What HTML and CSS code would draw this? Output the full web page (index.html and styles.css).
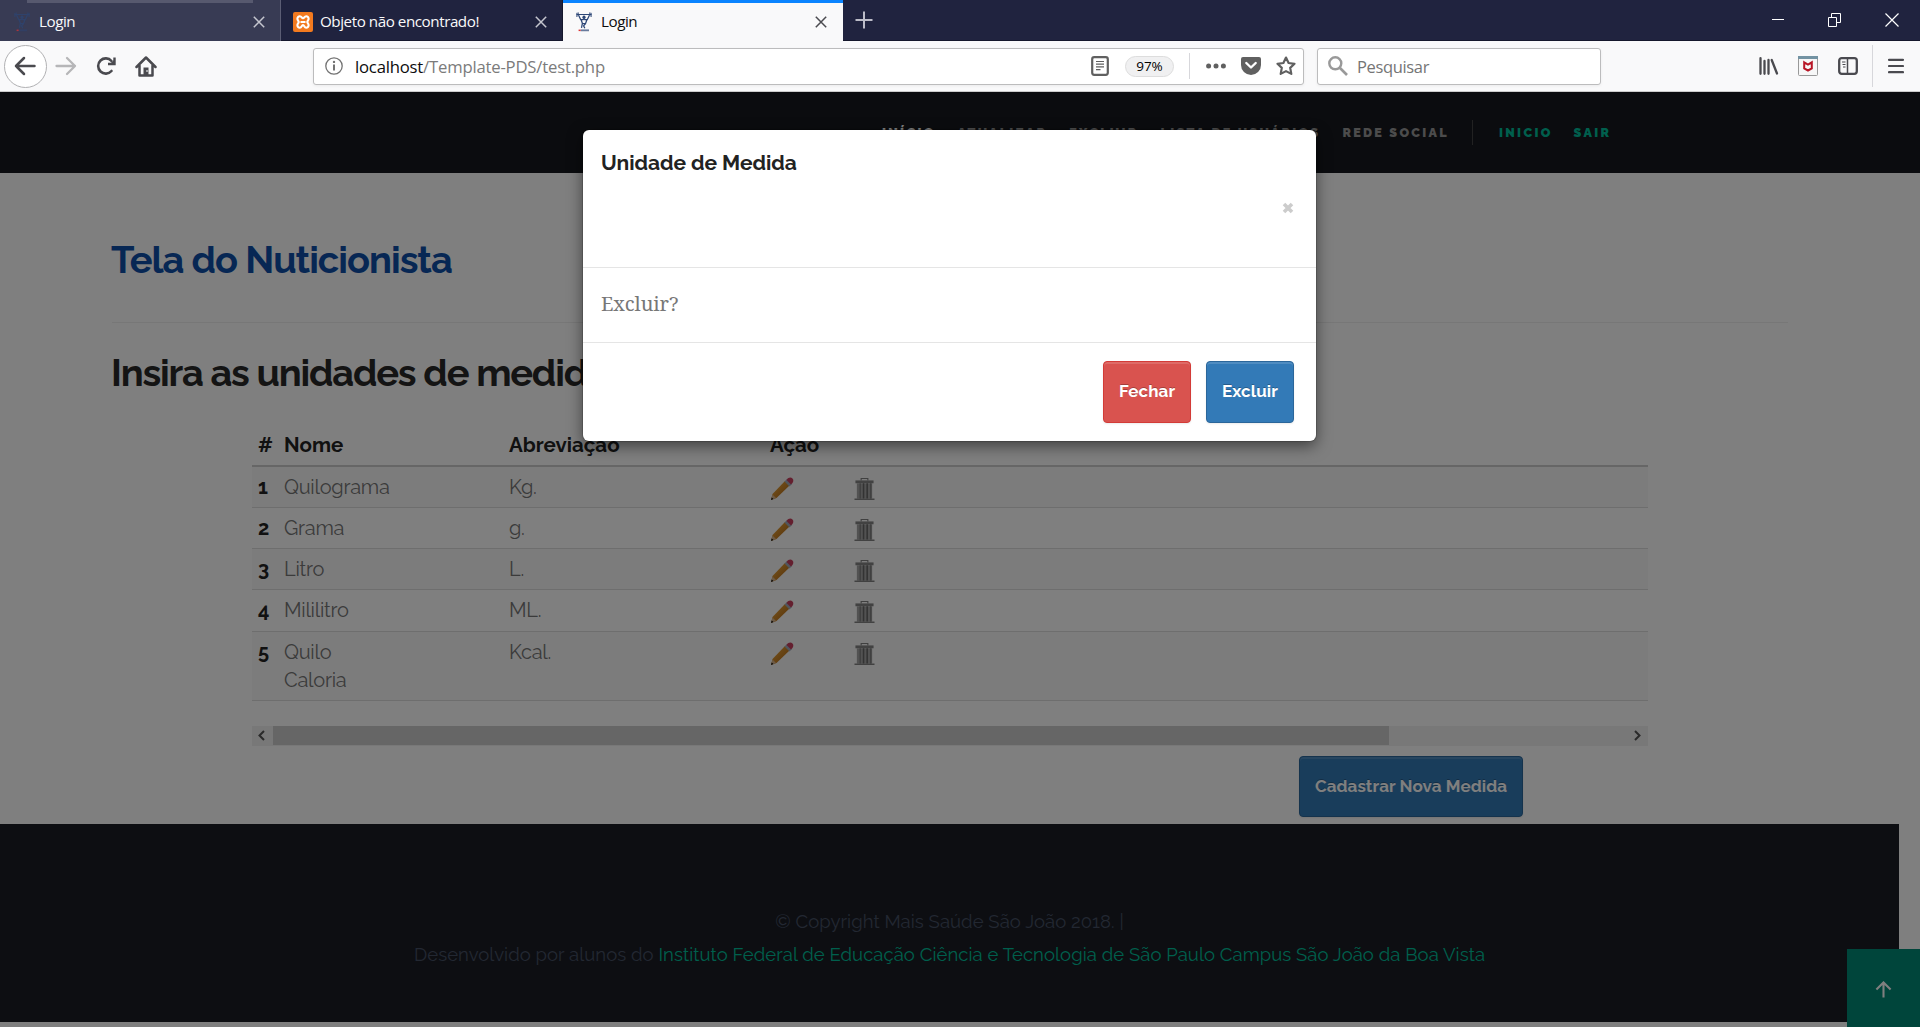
FILE: index.html
```html
<!DOCTYPE html>
<html lang="pt-BR">
<head>
<meta charset="utf-8">
<title>Login</title>
<link rel="stylesheet" href="styles.css">
</head>
<body>
<svg class="defs" width="0" height="0">
  <defs>
    <linearGradient id="wood" x1="0" y1="0" x2="1" y2="1"><stop offset="0" stop-color="#f4b240"/><stop offset="1" stop-color="#a85c10"/></linearGradient>
    <symbol id="lifter" viewBox="0 0 20 24">
      <path d="M1 3h18M1.500 1v5M3 .5v4M18.500 1v5M17 .5v4" stroke="currentColor" stroke-width="1.200" fill="none"/>
      <path d="M3.500 4l2.500 5h3l1-1 1 1h3l2.500-5M6.500 9l1.500 4.500M13.500 9l-1.500 4.500M7.500 14h5M8 14l-1 5M12 14l-2.500 2.500 1.500 3" stroke="currentColor" stroke-width="1.500" fill="none"/>
      <circle cx="10" cy="6.200" r="1.900" fill="currentColor"/>
      <path d="M6 22h10" stroke="currentColor" stroke-width="2.200" opacity=".7"/><path d="M3.500 22h2.500" stroke="#d33" stroke-width="1.800"/>
    </symbol>
    <symbol id="close" viewBox="0 0 12 12"><path d="M.8.8l10.400 10.400M11.200.8L.8 11.200" stroke="currentColor" stroke-width="1.500" fill="none"/></symbol>
    <symbol id="pencil" viewBox="0 0 24 24">
      <path d="M1 23l1.500-6L15 4l4.500 4.500L6.500 21z" fill="url(#wood)"/>
      <path d="M2.500 17.500L1 23l5-2z" fill="#d8b48c"/><path d="M1 23l.7-2.500 1.800 1.600z" fill="#111"/>
      <path d="M14.500 4.500L17 2l5 5-2.500 2.500z" fill="#a3adbc"/><path d="M16.500 3c2-3 4.500-3 6-1.500s1 4-1.500 6z" fill="#c83f5e"/>
    </symbol>
    <symbol id="trash" viewBox="0 0 22 24">
      <path d="M7.500 3V1h7v2" fill="none" stroke="#808080" stroke-width="1.200"/>
      <path d="M1.500 3h19v3h-19z" fill="#858585"/><path d="M3 6h16v16H3z" fill="#a4a4a4"/>
      <path d="M6.500 6v16M17.500 6v16" stroke="#808080" stroke-width="1.500"/>
      <path d="M10 6v16M13.800 6v16" stroke="#666" stroke-width="1.600"/>
      <path d="M.5 22.700h21" stroke="#6c6c6c" stroke-width="1.300"/>
    </symbol>
  </defs>
</svg>

<div class="tabs">
  <div class="tab tab-loading"><svg class="fav"><use href="#lifter"/></svg><span>Login</span><svg class="x"><use href="#close"/></svg></div>
  <div class="tab tab-second"><svg class="fav" viewBox="0 0 20 20"><rect width="20" height="20" rx="2" fill="#f37a1f"/><path d="M6.800 4.300c2 0 1.800 2 3.200 2s1.200-2 3.200-2a2.400 2.400 0 0 1 2.400 2.500c0 1.500-1.300 1.900-1.300 3.200s1.300 1.700 1.300 3.200a2.400 2.400 0 0 1-2.400 2.500c-2 0-1.800-2.700-3.200-2.700s-1.200 2.700-3.200 2.700a2.400 2.400 0 0 1-2.400-2.500c0-1.500 1.300-1.900 1.300-3.200S4.400 8.300 4.400 6.800a2.400 2.400 0 0 1 2.400-2.500zM7.500 10h5" fill="none" stroke="#fff" stroke-width="2.100"/></svg><span>Objeto não encontrado!</span><svg class="x"><use href="#close"/></svg></div>
  <div class="tab tab-active"><svg class="fav"><use href="#lifter"/></svg><span>Login</span><svg class="x"><use href="#close"/></svg></div>
  <svg class="plus" viewBox="0 0 18 18"><path d="M9 .5v17M.5 9h17" stroke="#bcbcc8" stroke-width="2"/></svg>
  <div class="window-controls">
    <svg width="12" height="12" viewBox="0 0 12 12"><path d="M0 5.500h12" stroke="#fff"/></svg>
    <svg width="13" height="14" viewBox="0 0 13 14"><path d="M.5 4.500h8v9h-8zM3.500 4V.5h9v9h-4" fill="none" stroke="#fff"/></svg>
    <svg width="14" height="14" viewBox="0 0 14 14"><path d="M.5.5l13 13M13.500.5l-13 13" stroke="#fff" stroke-width="1.200"/></svg>
  </div>
</div>

<div class="toolbar">
  <span class="back"><svg width="22" height="20" viewBox="0 0 22 20"><path d="M20.500 10H2M10 2L2 10l8 8" fill="none" stroke="#4a4a4f" stroke-width="2.500" stroke-linecap="round" stroke-linejoin="round"/></svg></span>
  <svg class="forward" width="22" height="20" viewBox="0 0 22 20"><path d="M1.500 10H20M12 2l8 8-8 8" fill="none" stroke="#b6b6b8" stroke-width="2.300" stroke-linecap="round" stroke-linejoin="round"/></svg>
  <svg class="reload" width="20" height="20" viewBox="0 0 20 20"><path d="M15.500 15A7.600 7.600 0 1 1 15.500 5" fill="none" stroke="#4a4a4f" stroke-width="2.600" stroke-linecap="round"/><path d="M18.500 1.500v6.500h-6.500" fill="none" stroke="#4a4a4f" stroke-width="2.400"/><path d="M19 3v5.500h-5.500z" fill="#4a4a4f"/></svg>
  <svg class="home" width="22" height="21" viewBox="0 0 22 21"><path d="M1.500 11L11 1.500 20.500 11M4.500 9.500v10h13v-10" fill="none" stroke="#4a4a4f" stroke-width="2.500" stroke-linecap="round" stroke-linejoin="round"/><path d="M8.500 20v-8.500h5V20z" fill="#4a4a4f"/><path d="M12 14v2" stroke="#fff" stroke-width="1"/></svg>
  <div class="urlbar">
    <svg class="info" width="18" height="18" viewBox="0 0 18 18"><circle cx="9" cy="9" r="8.200" fill="none" stroke="#737373" stroke-width="1.300"/><path d="M9 7.500v6" stroke="#737373" stroke-width="2"/><circle cx="9" cy="4.900" r="1.200" fill="#737373"/></svg>
    <span class="url"><b>localhost</b>/Template-PDS/test.php</span>
    <svg class="reader" width="18" height="20" viewBox="0 0 18 20"><rect x="1.200" y="1.200" width="15.600" height="17.600" rx="2" fill="none" stroke="#606060" stroke-width="2.200"/><path d="M5 5.500h8M5 8.200h8M5 10.900h8M5 13.600h4.500" stroke="#606060" stroke-width="1.200"/></svg>
    <span class="zoom-level">97%</span>
    <i class="rule"></i>
    <svg class="dots" width="20" height="6" viewBox="0 0 20 6"><g fill="#606060"><circle cx="2.600" cy="3" r="2.500"/><circle cx="10" cy="3" r="2.500"/><circle cx="17.400" cy="3" r="2.500"/></g></svg>
    <svg class="pocket" width="20" height="18" viewBox="0 0 20 18"><path d="M2 0h16q2 0 2 2v6a10 10 0 0 1-20 0V2q0-2 2-2z" fill="#606060"/><path d="M5.300 6l4.700 4.500L14.700 6" fill="none" stroke="#fff" stroke-width="2.400" stroke-linecap="round" stroke-linejoin="round"/></svg>
    <svg class="star" width="20" height="20" viewBox="0 0 20 20"><path d="M10 1.600l2.600 5.400 5.900.8-4.300 4.100 1.100 6L10 15.100l-5.300 2.800 1.100-6L1.500 7.800 7.400 7z" fill="none" stroke="#606060" stroke-width="2.200" stroke-linejoin="round"/></svg>
  </div>
  <div class="search">
    <svg width="20" height="20" viewBox="0 0 20 20"><circle cx="7.300" cy="7.300" r="6" fill="none" stroke="#999" stroke-width="2.400"/><path d="M12 12l7 7" stroke="#999" stroke-width="2.600"/></svg>
    <span>Pesquisar</span>
  </div>
  <svg class="library" width="20" height="18" viewBox="0 0 20 18"><path d="M1.500 1.200v15.600M5.500 4v12.800M9.500 3v13.800M12.700 3l5.300 13.500" stroke="#4a4a4f" stroke-width="2.300" stroke-linecap="round" fill="none"/></svg>
  <svg class="mcafee" width="20" height="20" viewBox="0 0 20 20"><rect x=".5" y=".5" width="19" height="19" rx="1" fill="#f7f7f7" stroke="#999"/><path d="M0 0h20v3H0z" fill="#7393a3"/><path d="M6.200 6.300L10 8.500l3.800-2.200v6.200L10 14.500 6.200 12.500z" fill="none" stroke="#b81626" stroke-width="2"/></svg>
  <svg class="sidebar" width="20" height="18" viewBox="0 0 20 18"><rect x="1.200" y="1.200" width="17.600" height="15.600" rx="2.500" fill="none" stroke="#4a4a4f" stroke-width="2.300"/><path d="M9.500 1v16" stroke="#4a4a4f" stroke-width="1.500"/><path d="M4 5h3.500M4.500 7.500h3M5 10h2.500" stroke="#4a4a4f" stroke-width="1.100"/></svg>
  <i class="tool-rule"></i>
  <svg class="menu" width="16" height="16" viewBox="0 0 16 16"><path d="M1 1.800h14M1 8h14M1 14.200h14" stroke="#4a4a4f" stroke-width="2.200" stroke-linecap="round"/></svg>
</div>

<div class="page">
  <nav class="nav">
    <a class="current">Início</a><a>Atualizar</a><a>Excluir</a><a>Lista de usuários</a><a>Rede Social</a>
    <span class="account"><a>Inicio</a><a>Sair</a></span>
  </nav>
  <main class="content">
    <h1 class="title">Tela do Nuticionista</h1>
    <h2 class="subtitle">Insira as unidades de medida</h2>
    <div class="table-wrap">
      <table class="units">
        <colgroup><col class="c-num"><col class="c-name"><col class="c-abbr"><col class="c-edit"><col></colgroup>
        <thead><tr><th>#</th><th>Nome</th><th>Abreviação</th><th>Ação</th><th></th></tr></thead>
        <tbody>
          <tr><th>1</th><td>Quilograma</td><td>Kg.</td><td><svg class="pencil"><use href="#pencil"/></svg></td><td><svg class="trash"><use href="#trash"/></svg></td></tr>
          <tr><th>2</th><td>Grama</td><td>g.</td><td><svg class="pencil"><use href="#pencil"/></svg></td><td><svg class="trash"><use href="#trash"/></svg></td></tr>
          <tr><th>3</th><td>Litro</td><td>L.</td><td><svg class="pencil"><use href="#pencil"/></svg></td><td><svg class="trash"><use href="#trash"/></svg></td></tr>
          <tr class="tall"><th>4</th><td>Mililitro</td><td>ML.</td><td><svg class="pencil"><use href="#pencil"/></svg></td><td><svg class="trash"><use href="#trash"/></svg></td></tr>
          <tr class="last"><th>5</th><td>Quilo<br>Caloria</td><td>Kcal.</td><td><svg class="pencil"><use href="#pencil"/></svg></td><td><svg class="trash"><use href="#trash"/></svg></td></tr>
        </tbody>
      </table>
      <div class="scrollbar">
        <svg width="21" height="19" viewBox="0 0 21 19"><path d="M12 5L7.500 9.500 12 14" fill="none" stroke="#555" stroke-width="2"/></svg>
        <i class="thumb"></i>
        <svg width="20" height="19" viewBox="0 0 20 19"><path d="M7 5l4.500 4.500L7 14" fill="none" stroke="#555" stroke-width="2"/></svg>
      </div>
    </div>
    <a class="btn btn-primary register">Cadastrar Nova Medida</a>
  </main>
  <footer class="footer">
    <p>© Copyright Mais Saúde São João 2018. |</p>
    <p>Desenvolvido por alunos do <a>Instituto Federal de Educação Ciência e Tecnologia de São Paulo Campus São João da Boa Vista</a></p>
  </footer>
  <div class="to-top"><svg width="17" height="17" viewBox="0 0 18 18"><path d="M9 17.500V2M1.500 9L9 1.500 16.500 9" fill="none" stroke="#fff" stroke-width="2.200"/></svg></div>
  <div class="backdrop"></div>
  <div class="modal">
    <div class="modal-head"><h4>Unidade de Medida</h4><svg class="dismiss" width="12" height="12" viewBox="0 0 12 12"><path d="M2 2l8 8M10 2l-8 8" stroke="#ccc" stroke-width="3.600"/></svg></div>
    <div class="modal-body">Excluir?</div>
    <div class="modal-foot"><a class="btn btn-danger">Fechar</a><a class="btn btn-primary">Excluir</a></div>
  </div>
</div>
</body>
</html>
```
FILE: styles.css
```css
* { box-sizing: border-box; }
body { margin: 0; width: 1920px; height: 1027px; overflow: hidden; font-family: Raleway, "Open Sans", sans-serif; }
h1, h2, h4, p { margin: 0; }
svg { display: block; flex: none; }
.defs { position: absolute; }

.tabs { display: flex; height: 41px; background: #20233f; font: 15.200px/41px "Open Sans", sans-serif; letter-spacing: -.45px; color: #f9f9fa; border-bottom: 1px solid #15172c; }
.tab { display: flex; align-items: center; width: 281px; height: 41px; padding: 2px 15px 0 12px; border-right: 1px solid #5b5d74; color: #f9f9fa; }
.tab span { flex: 1; margin-left: 7px; line-height: 36px; padding-bottom: 2px; }
.tab .x { width: 12px; height: 12px; color: #c5c6cf; }
.fav { width: 20px; height: 20px; color: #2c4676; }
.tab-loading { background: linear-gradient(#57596f, #57596f) 27px 0 / 226px 3px no-repeat, #383b54; }
.tab-second { width: 282px; border-right-color: #15172c; }
.tab-active { width: 280px; background: #f9f9fa; color: #0c0c0d; border-top: 3px solid #0a84ff; border-right: 0; padding: 0 16px 0 11px; }
.tab-active .x { color: #4a4a4f; }
.tab-loading .fav { opacity: .7; }
.plus { width: 18px; height: 18px; margin: 11px 0 0 12px; }
.window-controls { margin-left: auto; display: flex; align-items: center; gap: 44px; padding-right: 21px; }

.toolbar { display: flex; align-items: center; height: 51px; background: #f9f9fa; border-bottom: 1px solid #ccc; font-family: "Open Sans", sans-serif; }
.back { display: flex; align-items: center; justify-content: center; width: 43px; height: 43px; margin-left: 4px; padding-right: 1px; border: 1px solid #b1b1b3; border-radius: 50%; background: #fff; }
.forward { margin-left: 8px; }
.reload { margin-left: 19px; }
.home { margin-left: 19px; }
.urlbar, .search { display: flex; align-items: center; height: 37px; border: 1px solid #bcbcbd; border-radius: 3px; background: #fff; box-shadow: 0 1px 3px rgba(0,0,0,.06); }
.urlbar { width: 991px; margin-left: 156px; padding-left: 11px; }
.url { margin-left: 12px; font-size: 16.700px; letter-spacing: -.2px; color: #7b7b7b; flex: 1; }
.url b { font-weight: 400; color: #0c0c0d; }
.zoom-level { width: 49px; height: 21px; margin-left: 16px; border: 1px solid #ddd; border-radius: 11px; background: #f0f0f1; font-size: 13.500px; line-height: 19px; text-align: center; letter-spacing: -.1px; }
.rule { width: 1px; height: 26px; margin: 0 16px 0 15px; background: #d7d7db; }
.pocket { margin-left: 15px; }
.star { margin: 0 7px 0 15px; }
.search { width: 284px; margin-left: 13px; padding-left: 10px; font-size: 16.500px; letter-spacing: -.35px; color: #757575; }
.search span { margin-left: 9px; }
.library { margin-left: 158px; }
.mcafee { margin-left: 19px; }
.sidebar { margin-left: 20px; }
.tool-rule { width: 1px; height: 42px; margin: 0 15px 0 14px; background: #d7d7db; }

.page { position: relative; height: 935px; background: #fff; overflow: hidden; }
.nav { display: flex; align-items: center; height: 81px; padding-left: 882px; background: #16191e; color: #999; font-size: 12.600px; font-weight: 900; letter-spacing: 2.300px; text-transform: uppercase; white-space: nowrap; }
.nav > a { margin-right: 22px; }
.nav .current { color: #fff; }
.account { display: flex; gap: 21px; margin-left: 1px; padding-left: 26px; border-left: 1px solid #444; line-height: 25px; color: #00bf9a; }
.content { height: 651px; padding: 62px 132px 0 112px; }
.title, .subtitle { font-size: 38px; line-height: 50px; font-weight: 700; white-space: nowrap; text-indent: -1px; }
.title { height: 88px; letter-spacing: -1px; color: #0f4fa8; border-bottom: 1px solid #eee; }
.subtitle { margin-top: 25px; letter-spacing: -1.200px; color: #292929; }
.table-wrap { width: 1396px; margin: 26px 0 0 140px; }
.units { width: 100%; border-collapse: collapse; table-layout: fixed; font-size: 20px; letter-spacing: -.25px; line-height: 28px; color: #777; text-align: left; }
.c-num { width: 26px; } .c-name { width: 225px; } .c-abbr { width: 261px; } .c-edit { width: 84px; }
.units th { color: #222; font-weight: 700; }
.units th, .units td { padding: 6px 0 5px 6px; vertical-align: top; border-bottom: 1px solid #ddd; }
.units thead th { height: 42px; padding: 7px 0 3px 6px; border-bottom: 2px solid #ccc; font-size: 20.500px; letter-spacing: 0; }
.units tbody tr { height: 41px; }
.units tbody tr.tall { height: 42px; }
.units tbody tr:nth-child(odd) { background: #f9f9f9; }
.units tbody tr.last { height: 69px; }
.pencil { width: 24px; height: 24px; margin-top: 4px; }
.trash { width: 21px; height: 24px; margin-top: 4px; }
.scrollbar { display: flex; margin-top: 25px; height: 20px; background: #f0f0f0; }
.thumb { width: 1116px; height: 19px; margin-right: auto; background: #cdcdcd; }
.btn { display: inline-block; height: 62px; padding: 0 15px; line-height: 58px; color: #fff; font-size: 17px; letter-spacing: .1px; font-weight: 700; border: 1px solid; border-radius: 4px; text-align: center; white-space: nowrap; text-shadow: 0 -1px 0 rgba(0,0,0,.25); box-shadow: inset 0 2px 0 rgba(255,255,255,.14), 0 1px 2px rgba(0,0,0,.08); }
.btn-primary { background: #337ab7; border-color: #2b669a; }
.btn-danger { background: #d9534f; border-color: #d33b37; }
.register { display: block; width: 224px; height: 61px; margin: 10px 0 0 1187px; padding: 0; }
.footer { width: 1899px; height: 198px; padding-top: 81px; background: #1a1d24; color: #465065; font-size: 18.500px; line-height: 33px; letter-spacing: .06px; text-align: center; white-space: nowrap; }
.footer a { color: #00bf9a; }
.to-top { position: absolute; right: 0; bottom: 0; width: 73px; height: 78px; padding: 2px 1px 0 0; display: flex; align-items: center; justify-content: center; background: #008a76; }
.backdrop { position: absolute; inset: 0; background: rgba(0,0,0,.5); }
.modal { position: absolute; left: 583px; top: 38px; width: 733px; height: 311px; border-radius: 6px; background: #fff; box-shadow: 0 5px 15px rgba(0,0,0,.5), 0 0 0 1px rgba(0,0,0,.15); }
.modal-head { height: 138px; padding: 18px 18px; border-bottom: 1px solid #e5e5e5; }
.modal-head h4 { font-size: 21px; line-height: 30px; letter-spacing: -.05px; color: #222; }
.dismiss { margin: 24px 4px 0 auto; }
.modal-body { height: 75px; padding: 0 18px; line-height: 71px; border-bottom: 1px solid #e5e5e5; font-family: "Noto Serif", "Liberation Serif", serif; font-size: 20px; letter-spacing: -.1px; color: #777; }
.modal-foot { display: flex; justify-content: flex-end; gap: 15px; padding: 18px 22px; }
.modal-foot .btn { width: 88px; padding: 0; }
```
